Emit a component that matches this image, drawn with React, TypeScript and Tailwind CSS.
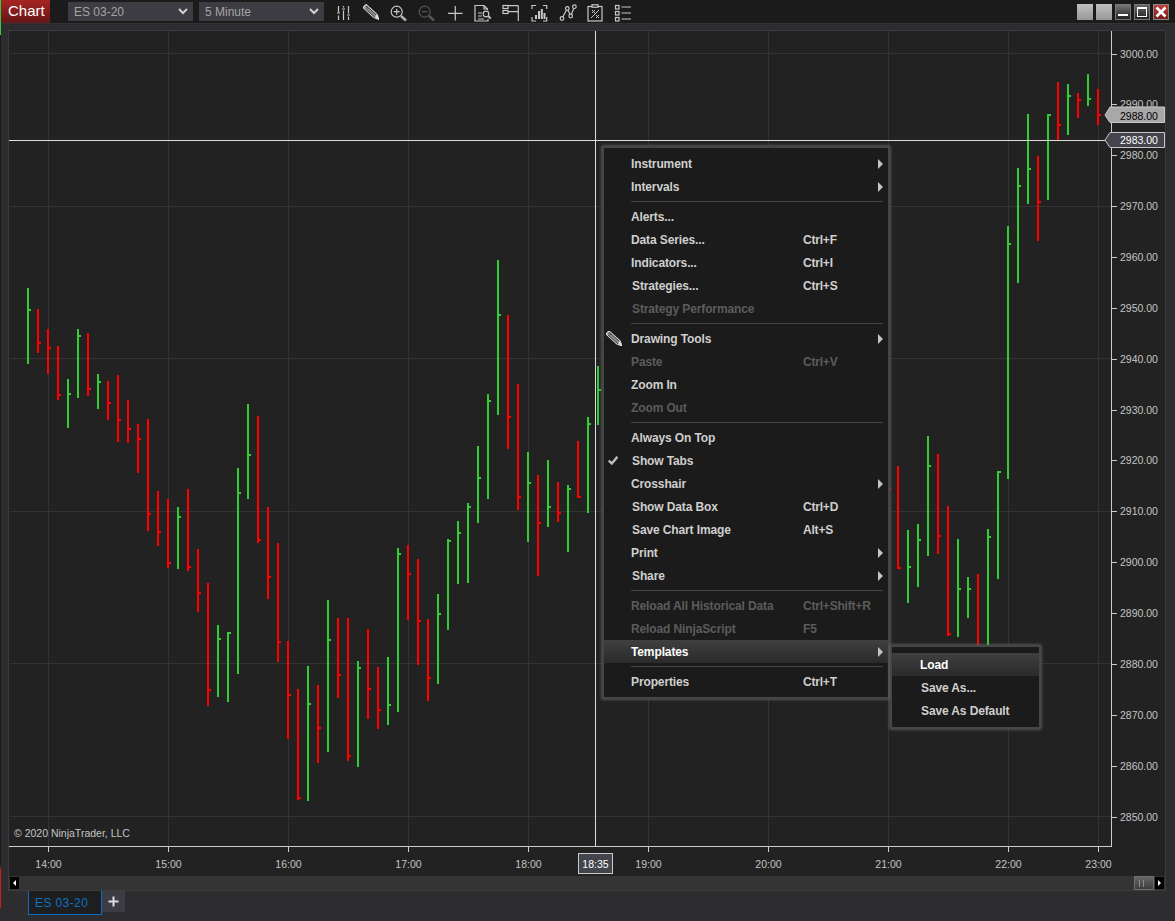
import { ReactNode } from "react";

type Bar = [number, number, number, number, "g" | "r"];

// x, high y, low y, close tick y, colour
const bars: Bar[] = [
  [28, 288, 364, 310, "g"], [38, 309, 353, 343, "r"], [48, 329, 374, 348, "r"], [58, 346, 400, 395, "r"],
  [68, 379, 428, 394, "g"], [78, 329, 398, 336, "g"], [88, 333, 396, 389, "r"], [98, 374, 409, 382, "g"],
  [108, 381, 420, 403, "r"], [118, 375, 442, 420, "r"], [128, 400, 443, 429, "r"], [138, 424, 473, 439, "r"],
  [148, 419, 531, 514, "r"], [158, 491, 546, 532, "r"], [168, 499, 568, 563, "r"], [178, 507, 569, 517, "g"],
  [188, 489, 571, 567, "r"], [198, 549, 612, 593, "r"], [208, 583, 706, 690, "r"], [218, 625, 697, 639, "g"],
  [228, 632, 702, 633, "g"], [238, 468, 674, 493, "g"], [248, 404, 499, 455, "g"], [258, 416, 543, 540, "r"],
  [268, 507, 599, 577, "r"], [278, 543, 662, 642, "r"], [288, 641, 739, 695, "r"], [298, 689, 800, 798, "r"],
  [308, 666, 801, 704, "g"], [318, 685, 763, 728, "r"], [328, 600, 752, 640, "g"], [338, 618, 698, 675, "r"],
  [348, 618, 761, 756, "r"], [358, 661, 767, 668, "g"], [368, 629, 719, 689, "r"], [378, 667, 729, 710, "r"],
  [388, 657, 725, 705, "g"], [398, 548, 712, 554, "g"], [408, 545, 620, 574, "r"], [418, 559, 665, 621, "r"],
  [428, 619, 701, 678, "r"], [438, 594, 684, 614, "g"], [448, 539, 630, 541, "g"], [458, 521, 584, 533, "g"],
  [468, 503, 583, 507, "g"], [478, 446, 523, 478, "g"], [488, 394, 499, 401, "g"], [498, 260, 415, 315, "g"],
  [508, 315, 449, 417, "r"], [518, 384, 510, 497, "r"], [528, 452, 542, 483, "g"], [538, 475, 576, 523, "r"],
  [548, 460, 527, 507, "g"], [558, 482, 522, 513, "r"], [568, 485, 552, 489, "g"], [578, 441, 498, 497, "r"],
  [588, 417, 513, 424, "g"], [598, 366, 425, 390, "g"], [888, 470, 520, 489, "r"],
  [898, 466, 569, 568, "r"], [908, 530, 603, 567, "g"], [918, 524, 587, 540, "g"], [928, 436, 556, 466, "g"],
  [938, 454, 554, 536, "r"], [948, 506, 636, 634, "r"], [958, 539, 637, 589, "g"], [968, 577, 618, 589, "g"],
  [978, 574, 660, 650, "r"], [988, 529, 660, 537, "g"], [998, 471, 579, 472, "g"], [1008, 226, 479, 244, "g"],
  [1018, 168, 283, 186, "g"], [1028, 114, 204, 169, "g"], [1038, 156, 241, 202, "r"], [1048, 114, 200, 115, "g"],
  [1058, 82, 140, 125, "r"], [1068, 84, 135, 96, "g"], [1078, 93, 118, 100, "r"], [1088, 74, 106, 99, "g"],
  [1098, 89, 125, 115, "r"],
];

const gridX = [48, 168, 288, 408, 528, 648, 768, 888, 1008, 1098];
const gridY = [53, 206, 358, 511, 663, 816];
const times = ["14:00", "15:00", "16:00", "17:00", "18:00", "19:00", "20:00", "21:00", "22:00", "23:00"];
const prices = Array.from({ length: 16 }, (_, i) => 3000 - i * 10);

function Pencil({ className }: { className?: string }) {
  return (
    <svg viewBox="3 5 16 15" className={className} fill="none">
      <path d="M3 8 L6 5 L17 15 L19 20 L14 18 Z" fill="#8a8a8a" stroke="#d8d8d8" strokeWidth="1.2" strokeLinejoin="round" />
      <path d="M5 9 L15 18 M7 7 L17 16 M6 6 L8 9" stroke="#2a2a2a" strokeWidth="0.8" />
      <path d="M15 17 L19 20 L17 15 Z" fill="#e4e4e4" />
    </svg>
  );
}

function ToolIcon({ children }: { children: ReactNode }) {
  return (
    <svg viewBox="0 0 22 22" className="w-[22px] h-[22px] shrink-0" fill="none" stroke="#c8c8c8" strokeWidth="1.2">
      {children}
    </svg>
  );
}

function Toolbar() {
  return (
    <div className="flex items-center h-[24px] bg-[#1b1b1b] border-b border-[#333336] shrink-0">
      <div className="w-[50px] h-[23px] self-start flex items-center pl-[8px] text-[15px] text-white bg-gradient-to-b from-[#a82424] to-[#651616]">
        Chart
      </div>
      <Combo label="ES 03-20" className="ml-[18px]" />
      <Combo label="5 Minute" className="ml-[6px]" />
      <div className="flex gap-[6px] ml-[8px]">
        <ToolIcon>
          <path d="M6.5 5 V19 M11.5 5 V19 M16.5 5 V19" />
          <path d="M4.5 13 H8 M9.5 8 H13 M14.5 14 H18" stroke="#1b1b1b" strokeWidth="3" />
          <path d="M5 12 H8 M10 8 H13 M15 14 H18" />
        </ToolIcon>
        <Pencil className="w-[22px] h-[22px] shrink-0 p-[3px]" />
        <ToolIcon>
          <circle cx="8.7" cy="10.7" r="5.5" />
          <path d="M8.7 7.7 V13.7 M5.7 10.7 H11.7" />
          <path d="M13 15 L18 19.5" strokeWidth="2.6" stroke="#b0b0b0" />
        </ToolIcon>
        <ToolIcon>
          <circle cx="8.7" cy="10.7" r="5.5" stroke="#565656" />
          <path d="M5.7 10.7 H11.7" stroke="#565656" />
          <path d="M13 15 L18 19.5" strokeWidth="2.6" stroke="#565656" />
        </ToolIcon>
        <ToolIcon>
          <path d="M11.3 5 V19.6 M4 12.3 H18.6" />
        </ToolIcon>
        <ToolIcon>
          <path d="M15.5 9 V8 L12 4.5 H3 V20 H16 V18 M12 4.5 V8 H15.5" />
          <path d="M6 12 H10 M6 15 H10 M6 18 H12" />
          <circle cx="14" cy="13" r="2.8" />
          <path d="M16 15 L18.8 17.5" strokeWidth="1.8" />
        </ToolIcon>
        <ToolIcon>
          <path d="M18.3 4.7 V20 M8 4.7 H18.3 M8 10.7 H18.3" />
          <rect x="3" y="4.5" width="5" height="3" />
          <rect x="3" y="9.5" width="5" height="3" />
        </ToolIcon>
        <ToolIcon>
          <path d="M4 8 V4.5 H8 M15 4.5 H18.7 V8 M4 16 V20 H8 M15 20 H18.7 V16" />
          <path d="M8 18 V14 M11 18 V10 M13.8 18 V8 M16.5 18 V12" strokeWidth="2" />
        </ToolIcon>
        <ToolIcon>
          <path d="M6 17.5 L11.3 7.5 L14.7 15 L18.4 5.7" />
          <circle cx="6" cy="17.5" r="1.8" fill="#1b1b1b" />
          <circle cx="11.3" cy="7.5" r="1.8" fill="#1b1b1b" />
          <circle cx="14.7" cy="15" r="1.8" fill="#1b1b1b" />
          <circle cx="18.4" cy="5.7" r="1.8" fill="#1b1b1b" />
        </ToolIcon>
        <ToolIcon>
          <rect x="4" y="5.5" width="14" height="14.5" />
          <rect x="8" y="3.8" width="6" height="2.4" fill="#1b1b1b" />
          <path d="M7 17 L15 9 M8 9 L11 12 M11 9 L8 12 M12 14 L15 17 M15 14 L12 17" strokeWidth="1" />
        </ToolIcon>
        <ToolIcon>
          <rect x="3.5" y="4.5" width="3.5" height="3.5" />
          <rect x="3.5" y="10.5" width="3.5" height="3.5" />
          <rect x="3.5" y="16.5" width="3.5" height="3.5" />
          <path d="M9.5 6 H19 M9.5 12 H19 M9.5 18 H19" />
        </ToolIcon>
      </div>
      <div className="flex gap-[3px] ml-auto mr-[6px]">
        <div className="w-[16px] h-[16px] bg-gradient-to-b from-[#c0c0c0] to-[#989898]" />
        <div className="w-[16px] h-[16px] bg-gradient-to-b from-[#c0c0c0] to-[#989898]" />
        <div className="w-[16px] h-[16px] flex items-end justify-center pb-[3px] border border-[#777] bg-gradient-to-b from-[#777] to-[#222]">
          <div className="w-[10px] h-[2px] bg-white" />
        </div>
        <div className="w-[16px] h-[16px] flex items-center justify-center border border-[#777] bg-gradient-to-b from-[#666] to-[#222]">
          <div className="w-[10px] h-[10px] border border-white border-t-2" />
        </div>
        <div className="w-[16px] h-[16px] flex items-center justify-center border border-[#888] bg-gradient-to-b from-[#c04040] to-[#7c1c1c]">
          <svg viewBox="0 0 12 12" className="w-[12px] h-[12px]" stroke="white" strokeWidth="2.6">
            <path d="M1.5 1.5 L10.5 10.5 M10.5 1.5 L1.5 10.5" />
          </svg>
        </div>
      </div>
    </div>
  );
}

function Combo({ label, className }: { label: string; className: string }) {
  return (
    <div className={`w-[125px] h-[19px] flex items-center justify-between pl-[6px] pr-[5px] bg-[#3c3c42] text-[12px] text-[#a4a4a4] ${className}`}>
      {label}
      <svg viewBox="0 0 10 7" className="w-[10px] h-[7px]" fill="none" stroke="#d0d0d0" strokeWidth="2">
        <path d="M1 1 L5 5 L9 1" />
      </svg>
    </div>
  );
}

function Chart() {
  return (
    <svg viewBox="9 31 1156 845" className="block w-[1156px] h-[845px] bg-[#222222]" shapeRendering="crispEdges">
      {gridX.map((x) => (
        <rect key={x} x={x} y={31} width={1} height={815} fill="#333333" />
      ))}
      {gridY.map((y) => (
        <rect key={y} x={10} y={y} width={1101} height={1} fill="#333333" />
      ))}
      {bars.map(([x, high, low, tick, c]) => (
        <g key={x} fill={c === "g" ? "#32cd32" : "#ff0000"}>
          <rect x={x - 1} y={high} width={2} height={low - high} />
          <rect x={x + 1} y={tick - 1} width={2} height={2} />
        </g>
      ))}
      <rect x={9} y={846} width={1103} height={1} fill="#cccccc" />
      <rect x={1111} y={31} width={1} height={815} fill="#cccccc" />
      {prices.map((p, i) => {
        const y = Math.round(53.5 + i * 50.87);
        return (
          <g key={p}>
            <rect x={1112} y={y} width={5} height={1} fill="#cccccc" />
            <text x={1120} y={y + 4} className="text-[10.5px] fill-[#c4c4c4]">{p}.00</text>
          </g>
        );
      })}
      {times.map((t, i) => (
        <g key={t}>
          <rect x={gridX[i]} y={847} width={1} height={5} fill="#cccccc" />
          <text x={gridX[i] + 0.5} y={868} textAnchor="middle" className="text-[10.5px] fill-[#c4c4c4]">{t}</text>
        </g>
      ))}
      <text x={14} y={837} className="text-[10.5px] fill-[#c4c4c4]">© 2020 NinjaTrader, LLC</text>
      {/* crosshair */}
      <rect x={9} y={140} width={1096} height={1} fill="#dddddd" />
      <rect x={595} y={31} width={1} height={815} fill="#dddddd" />
      <g shapeRendering="auto">
        <path d="M1105 115 L1110 107 H1164.5 V122.5 H1110 Z" fill="#a8a8a8" stroke="#c8c8c8" />
        <text x={1120} y={119.5} className="text-[10.5px] fill-black">2988.00</text>
        <path d="M1105 140 L1110 132.5 H1164.5 V147.5 H1110 Z" fill="#44444c" stroke="#c8c8c8" />
        <text x={1120} y={144} className="text-[10.5px] fill-white">2983.00</text>
        <rect x={578.5} y={853.5} width={34} height={20} fill="#44444c" stroke="#cccccc" />
        <text x={595.5} y={868} textAnchor="middle" className="text-[10.5px] fill-white">18:35</text>
      </g>
    </svg>
  );
}

function Arrow() {
  return <div className="ml-auto w-0 h-0 border-y-[5px] border-y-transparent border-l-[5px] border-l-[#c4c4c4]" />;
}

function Sep() {
  return (
    <div className="h-[7px] pt-[3px] pl-[27px] pr-[5px]">
      <div className="h-px bg-[#444444]" />
    </div>
  );
}

type RowProps = {
  label: string;
  shortcut?: string;
  off?: boolean;
  arrow?: boolean;
  active?: boolean;
  nudge?: boolean;
  icon?: ReactNode;
};

function Row({ label, shortcut, off, arrow, active, nudge, icon }: RowProps) {
  const color = off ? "text-[#5c5c5c]" : active ? "text-white" : "text-[#cfcfcf]";
  const bg = active ? "bg-gradient-to-b from-[#404040] to-[#2a2a2a]" : "";
  return (
    <div className={`flex items-center h-[23px] pr-[5px] ${color} ${bg}`}>
      <div className="w-[27px] shrink-0 flex items-center">{icon}</div>
      <div className={`w-[172px] shrink-0 whitespace-nowrap ${nudge ? "pl-px" : ""}`}>{label}</div>
      {shortcut && <div className="whitespace-nowrap tracking-[-0.2px]">{shortcut}</div>}
      {arrow && <Arrow />}
    </div>
  );
}

function ContextMenu() {
  return (
    <div className="absolute left-[602px] top-[146px] w-[288px] pt-[4px] pb-[4px] border-2 border-[#464646] bg-[#1b1b1b] text-[12px] font-bold tracking-[-0.12px] shadow-[0_0_3px_#777777]">
      <Row label="Instrument" arrow />
      <Row label="Intervals" arrow />
      <Sep />
      <Row label="Alerts..." />
      <Row label="Data Series..." shortcut="Ctrl+F" />
      <Row label="Indicators..." shortcut="Ctrl+I" />
      <Row label="Strategies..." shortcut="Ctrl+S" nudge />
      <Row label="Strategy Performance" off nudge />
      <Sep />
      <Row label="Drawing Tools" arrow icon={<Pencil className="w-[16px] h-[15px] ml-[2px]" />} />
      <Row label="Paste" shortcut="Ctrl+V" off />
      <Row label="Zoom In" />
      <Row label="Zoom Out" off />
      <Sep />
      <Row label="Always On Top" />
      <Row
        label="Show Tabs"
        nudge
        icon={
          <svg viewBox="0 0 10 9" className="w-[10px] h-[9px] ml-[4px]" fill="none" stroke="#bdbdbd" strokeWidth="2.4">
            <path d="M0.8 4.5 L3.8 7.5 L9.4 0.8" />
          </svg>
        }
      />
      <Row label="Crosshair" arrow />
      <Row label="Show Data Box" shortcut="Ctrl+D" nudge />
      <Row label="Save Chart Image" shortcut="Alt+S" nudge />
      <Row label="Print" arrow />
      <Row label="Share" arrow nudge />
      <Sep />
      <Row label="Reload All Historical Data" shortcut="Ctrl+Shift+R" off />
      <Row label="Reload NinjaScript" shortcut="F5" off />
      <Row label="Templates" arrow active />
      <Sep />
      <Row label="Properties" shortcut="Ctrl+T" />
    </div>
  );
}

function SubMenu() {
  return (
    <div className="absolute left-[890px] top-[645px] w-[151px] pt-[6px] pb-[5px] border-2 border-[#464646] bg-[#1b1b1b] text-[12px] font-bold tracking-[-0.12px] shadow-[0_0_3px_#777777]">
      <div className="h-[23px] flex items-center pl-[28px] text-white bg-gradient-to-b from-[#404040] to-[#2a2a2a]">Load</div>
      <div className="h-[23px] flex items-center pl-[29px] text-[#cfcfcf]">Save As...</div>
      <div className="h-[23px] flex items-center pl-[29px] text-[#cfcfcf]">Save As Default</div>
    </div>
  );
}

function ScrollBar() {
  return (
    <div className="h-[14px] flex items-center bg-[#343434] pl-px">
      <div className="w-[9px] h-[12px] bg-black flex items-center justify-center">
        <div className="w-0 h-0 border-y-[3px] border-y-transparent border-r-[3px] border-r-white" />
      </div>
      <div className="ml-auto w-[20px] h-[14px] flex items-center gap-[3px] pl-[4px] border border-[#707070] bg-gradient-to-b from-[#666666] to-[#3c3c3c]">
        <div className="w-px h-[7px] bg-[#8a8a8a]" />
        <div className="w-px h-[7px] bg-[#8a8a8a]" />
      </div>
      <div className="w-[9px] h-[12px] ml-px mr-px bg-black flex items-center justify-center">
        <div className="w-0 h-0 border-y-[3px] border-y-transparent border-l-[3px] border-l-white" />
      </div>
    </div>
  );
}

function TabStrip() {
  return (
    <div className="flex items-start pl-[28px] flex-1 bg-[#2d2d30]">
      <div className="w-[74px] h-[24px] flex items-center pl-[6px] border-x border-b border-[#0a6ec8] bg-[#1e1e1e] text-[12px] tracking-[0.4px] text-[#0b72c4]">
        ES 03-20
      </div>
      <div className="w-[23px] h-[21px] flex items-center justify-center bg-[#3c3c44]">
        <svg viewBox="0 0 11 11" className="w-[11px] h-[11px]" stroke="#dddddd" strokeWidth="2">
          <path d="M5.5 0.5 V10.5 M0.5 5.5 H10.5" />
        </svg>
      </div>
    </div>
  );
}

export default function App() {
  return (
    <div className="relative flex flex-col w-[1175px] h-[921px] overflow-hidden bg-[#2d2d30] font-['Liberation_Sans',Arial,sans-serif]">
      <Toolbar />
      <div className="pt-[6px] pl-[8px] shrink-0">
        <div className="w-[1158px] border border-[#3c3c3e]">
          <Chart />
          <ScrollBar />
        </div>
      </div>
      <TabStrip />
      <ContextMenu />
      <SubMenu />
      {/* bits of other windows peeking out on the left edge */}
      <div className="absolute left-0 top-0 w-px h-[35px] bg-[#2ecc40]" />
      <div className="absolute left-0 top-[35px] w-px h-[830px] bg-[#1a1a1a]" />
      <div className="absolute left-0 top-[868px] w-px h-[40px] bg-[#d11a1a]" />
    </div>
  );
}
